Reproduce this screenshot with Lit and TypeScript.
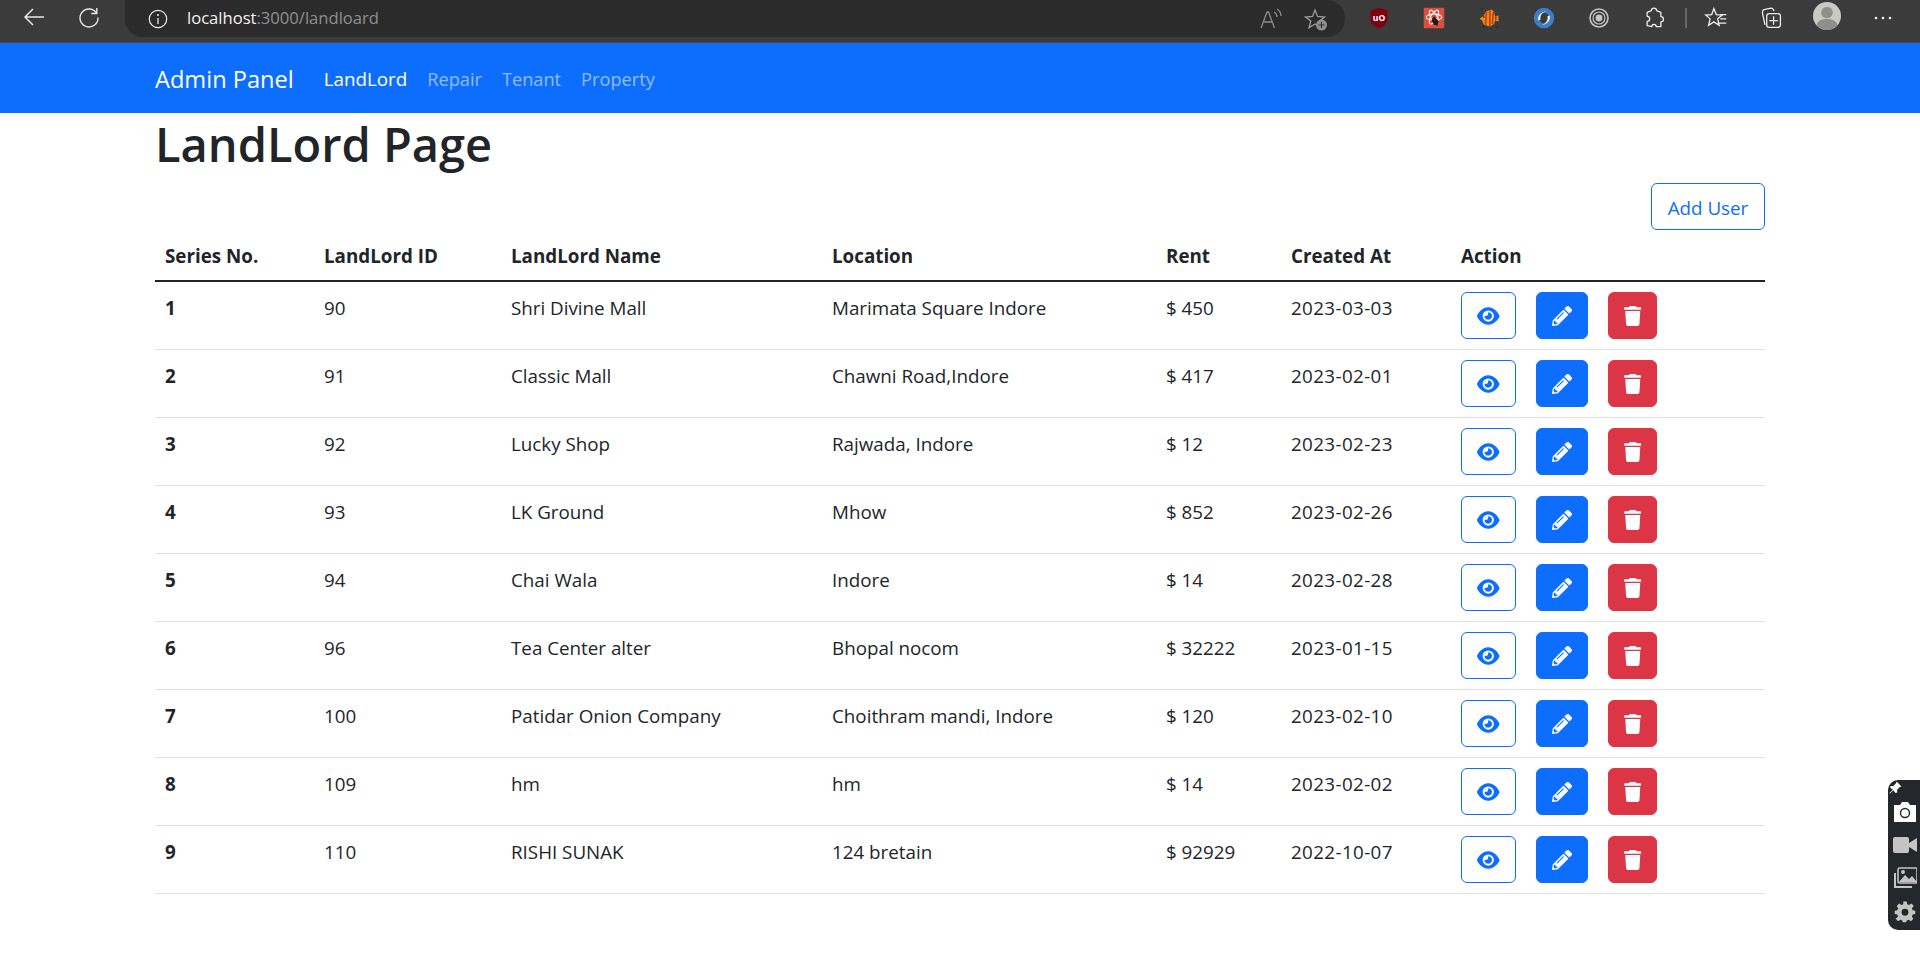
import { LitElement, html, css, svg } from "lit";
import { customElement } from "lit/decorators.js";

const rows = [
  [1, 90, "Shri Divine Mall", "Marimata Square Indore", "$ 450", "2023-03-03"],
  [2, 91, "Classic Mall", "Chawni Road,Indore", "$ 417", "2023-02-01"],
  [3, 92, "Lucky Shop", "Rajwada, Indore", "$ 12", "2023-02-23"],
  [4, 93, "LK Ground", "Mhow", "$ 852", "2023-02-26"],
  [5, 94, "Chai Wala", "Indore", "$ 14", "2023-02-28"],
  [6, 96, "Tea Center alter", "Bhopal nocom", "$ 32222", "2023-01-15"],
  [7, 100, "Patidar Onion Company", "Choithram mandi, Indore", "$ 120", "2023-02-10"],
  [8, 109, "hm", "hm", "$ 14", "2023-02-02"],
  [9, 110, "RISHI SUNAK", "124 bretain", "$ 92929", "2022-10-07"],
];

const eye = html`<svg class="ic eye" viewBox="0 0 576 512"><path fill="currentColor" d="M288 32c-80.8 0-145.5 36.8-192.6 80.6C48.6 156 17.3 208 2.5 243.7c-3.3 7.9-3.3 16.7 0 24.6C17.3 304 48.6 356 95.4 399.4C142.5 443.2 207.2 480 288 480s145.5-36.8 192.6-80.6c46.8-43.5 78.1-95.4 93-131.1c3.3-7.9 3.3-16.7 0-24.6c-14.9-35.7-46.2-87.7-93-131.1C433.5 68.8 368.8 32 288 32zM144 256a144 144 0 1 1 288 0 144 144 0 1 1 -288 0zm144-64c0 35.3-28.7 64-64 64c-7.1 0-13.9-1.2-20.3-3.3c-5.5-1.8-11.9 1.6-11.7 7.4c.3 6.9 1.3 13.8 3.2 20.7c13.7 51.2 66.4 81.6 117.6 67.9s81.6-66.4 67.9-117.6c-11.1-41.5-47.8-69.4-88.6-71.1c-5.8-.2-9.2 6.1-7.4 11.7c2.1 6.4 3.3 13.2 3.3 20.3z"/></svg>`;
const pencil = html`<svg class="ic pen" viewBox="0 0 512 512"><path fill="currentColor" d="M497.9 142.1l-46.1 46.1c-4.7 4.7-12.3 4.7-17 0l-111-111c-4.7-4.7-4.7-12.3 0-17l46.1-46.1c18.7-18.7 49.1-18.7 67.9 0l60.1 60.1c18.8 18.7 18.8 49.1 0 67.9zM284.2 99.8L21.6 362.4.4 483.9c-2.9 16.4 11.4 30.6 27.8 27.8l121.5-21.3 262.6-262.6c4.7-4.7 4.7-12.3 0-17l-111-111c-4.8-4.7-12.4-4.7-17.1 0zM124.1 339.9c-5.5-5.5-5.5-14.3 0-19.8l154-154c5.5-5.5 14.3-5.5 19.8 0s5.5 14.3 0 19.8l-154 154c-5.5 5.5-14.3 5.5-19.8 0zM88 424h48v36.3l-64.5 11.3-31.1-31.1L51.7 376H88v48z"/></svg>`;
const trash = html`<svg class="ic bin" viewBox="0 0 448 512"><path fill="currentColor" d="M135.2 17.7L128 32H32C14.3 32 0 46.3 0 64S14.3 96 32 96H416c17.7 0 32-14.3 32-32s-14.3-32-32-32H320l-7.2-14.3C307.4 6.8 296.3 0 284.2 0H163.8c-12.1 0-23.2 6.8-28.6 17.7zM416 128H32L53.2 467c1.6 25.3 22.6 45 47.9 45H346.9c25.3 0 46.3-19.7 47.9-45L416 128z"/></svg>`;

const ext = (body: unknown, cls = "tb", vb = "0 0 24 24") => html`<svg class=${cls} viewBox=${vb}>${body}</svg>`;
const small = "-2 -2 28 28";

@customElement("app-root")
export class AppRoot extends LitElement {
  static styles = css`
    :host { display: block; min-height: 100vh; background: #fff; color: #212529; font-family: "Open Sans", "Noto Sans", sans-serif; font-size: 18.8px; line-height: 30px; }
    * { box-sizing: border-box; }
    .chrome { height: 43px; background: #3b3b3b; display: flex; align-items: flex-start; border-bottom: 1px solid #4b4b4b; }
    .nav-ic { display: flex; padding: 5px 0 0 22px; gap: 31px; width: 125px; flex: none; }
    .tb { width: 24px; height: 24px; flex: none; display: block; }
    .addr { width: 1220px; height: 37px; flex: none; background: #2b2b2b; border-radius: 0 18px 18px 18px; display: flex; align-items: center; padding: 0 17px 0 21px; }
    .url { margin: -2px 0 0 17px; font-size: 16.6px; line-height: 30px; color: #8f8f8f; flex: 1; white-space: nowrap; }
    .url b { font-weight: 400; color: #f2f2f2; }
    .addr-right { display: flex; gap: 21px; }
    .tools { display: flex; gap: 31px; padding: 6px 0 0 22px; align-items: flex-start; }
    .sep { width: 2px; height: 20px; background: #666; margin: 2px -14px 0 -12px; flex: none; }
    .avatar { width: 28px; height: 28px; margin: -4px -1px 0 -1px; }
    .navbar { height: 70px; background: #0d6efd; padding: 2px 155px 0; display: flex; align-items: center; }
    .brand { font-size: 23.6px; color: #fff; margin-right: 20px; line-height: 38px; }
    .navbar a { padding: 0 10px; color: rgba(255,255,255,.55); text-decoration: none; font-size: 18.2px; }
    .navbar a.active { color: #fff; font-size: 18.8px; }
    main { padding: 0 155px; }
    h1 { margin: 0 0 10px; padding-top: 1px; height: 60px; font-size: 47px; font-weight: 600; line-height: 60px; }
    .bar { display: flex; justify-content: flex-end; }
    .btn { height: 47px; border-radius: 6px; border: 1px solid #0d6efd; display: inline-flex; align-items: center; justify-content: center; padding: 1px 15px 0; background: #fff; color: #0d6efd; font: inherit; }
    .btn.add { width: 114px; padding-top: 2px; }
    .btn.solid { background: #0d6efd; color: #fff; }
    .btn.danger { background: #dc3545; border-color: #dc3545; color: #fff; }
    table { width: 100%; border-collapse: collapse; table-layout: fixed; }
    th, td { padding: 11px 10px 0; text-align: left; vertical-align: top; white-space: nowrap; }
    th { font-weight: 700; border-bottom: 2px solid #212529; height: 51px; }
    td { border-bottom: 1px solid #dee2e6; height: 68px; }
    td.num { font-weight: 700; }
    td.date { letter-spacing: .38px; }
    col.c1 { width: 159px; } col.c2 { width: 187px; } col.c3 { width: 321px; } col.c4 { width: 334px; } col.c5 { width: 125px; } col.c6 { width: 170px; }
    .acts { display: flex; gap: 20px; margin-top: -1px; }
    .ic { display: block; height: 20px; }
    .ic.eye { width: 22.5px; } .ic.pen { width: 20px; } .ic.bin { width: 17.5px; }
    .side { position: fixed; right: 0; top: 780px; width: 32px; height: 150px; background: #24282d; border-radius: 10px 0 0 10px; display: flex; flex-direction: column; align-items: flex-end; padding: 20px 3px 0 0; gap: 9px; }
    .side svg { width: 24px; height: 24px; display: block; }
    .side svg.pin { position: absolute; left: 1px; top: 1px; width: 13px; height: 13px; }
  `;

  render() {
    return html`
      <div class="chrome">
        <div class="nav-ic">
          ${ext(svg`<path d="M22 12H3M11 4l-8 8 8 8" fill="none" stroke="#e8e8e8" stroke-width="1.5"/>`)}
          ${ext(svg`<path d="M19.5 8A9 9 0 1 0 21 12.5M19.8 3v5.5h-5.5" fill="none" stroke="#e8e8e8" stroke-width="1.4"/>`)}
        </div>
        <div class="addr">
          ${ext(svg`<circle cx="12" cy="12" r="8.7" fill="none" stroke="#e8e8e8" stroke-width="1.2"/><path d="M12 11v6" stroke="#e8e8e8" stroke-width="1.3"/><circle cx="12" cy="8" r="1" fill="#e8e8e8"/>`)}
          <div class="url"><b>localhost</b>:3000/landloard</div>
          <div class="addr-right">
            ${ext(svg`<path d="M2 21l6-16h1.500l6 16M4.500 15h9" fill="none" stroke="#8c8c8c" stroke-width="1.300"/><path d="M15 5c2 1 3 3 3 5M18 2c2.500 1.500 4 4 4 7" fill="none" stroke="#8c8c8c" stroke-width="1.300"/>`)}
            ${ext(svg`<path d="M11 3l2.500 6.500 7 .5-5.400 4.400 1.800 6.800L11 17l-6 3.800 1.800-6.800L1.500 10l7-.5z" fill="none" stroke="#9a9a9a" stroke-width="1.300"/><circle cx="17.500" cy="18" r="5.500" fill="#8f8f8f"/><path d="M17.500 15v6M14.500 18h6" stroke="#333" stroke-width="1.200"/>`)}
          </div>
        </div>
        <div class="tools">
          ${ext(svg`<path d="M12 0l10 3.500v10c0 5-4.500 8.500-10 10.500C6.500 22 2 18.500 2 13.500v-10z" fill="#800010"/><text x="12" y="15" font-size="10" font-family="Open Sans" font-weight="700" text-anchor="middle" fill="#fff">uO</text>`, "tb", small)}
          ${ext(svg`<rect x="0" y="0" width="24" height="24" rx="1.500" fill="#dd4f3d"/><g fill="none" stroke="#fff" stroke-width="1.200"><ellipse cx="12" cy="11" rx="9" ry="3.700"/><ellipse cx="12" cy="11" rx="9" ry="3.700" transform="rotate(60 12 11)"/><ellipse cx="12" cy="11" rx="9" ry="3.700" transform="rotate(120 12 11)"/></g><path d="M12 10l6 6-2 5-4-1-3-5z" fill="#2a1a18"/>`, "tb", small)}
          ${ext(svg`<path d="M1 13l4-3 4-6 6-2 3 3 1 5 4-1v7l-4-1-1 4-5 3-7-2-2-5z" fill="#ef8c12"/><path d="M9 5l-1 15M13 3v19M17 5l-1 14" stroke="#c83a12" stroke-width="2"/><path d="M6 9v3M20 10v4" stroke="#222" stroke-width="1.200"/><path d="M3 0h1.800v1.800H3zM21 22h1.800v1.800H21zM5 21h1.800v1.800H5z" fill="#222"/>`, "tb", small)}
          ${ext(svg`<circle cx="12" cy="12" r="9" fill="none" stroke="#3f7cc6" stroke-width="6"/><path d="M5 15C4 9 9 4 15 4c-5 1-8 5-7 10M19 9c1 6-4 11-10 11 5-1 8-5 7-10" fill="#dcecff"/>`, "tb", small)}
          ${ext(svg`<g fill="none" stroke="#c6c6c6"><circle cx="12" cy="12" r="10.500" stroke-width="1.800"/><circle cx="12" cy="12" r="7" stroke-width="1.400"/></g><circle cx="12" cy="12" r="4" fill="#c6c6c6"/>`, "tb", small)}
          ${ext(svg`<path d="M9 3.500a3 3 0 0 1 6 0l5 2v5a3 3 0 0 1 0 6V22h-5.500a2.500 2.500 0 0 0-5 0L4 21v-5a3 3 0 0 0 0-6V5.500z" fill="none" stroke="#eee" stroke-width="1.500" stroke-linejoin="round"/>`, "tb", small)}
          <div class="sep"></div>
          ${ext(svg`<path d="M9.500 1l2.800 7 7 .5-5.400 4.500 1.800 7.500-6.200-4-6.200 4 1.800-7.500L0 8.500 7 8z" fill="none" stroke="#eee" stroke-width="1.500"/><path d="M17 8h7M17 13h7M14 18h10" stroke="#eee" stroke-width="1.500"/>`, "tb", small)}
          ${ext(svg`<path d="M5 20L2 6c0-2 1-4 3-4l7-1.500c2 0 3 1 3.500 3.500" fill="none" stroke="#eee" stroke-width="1.500"/><rect x="7" y="7" width="16" height="16" rx="3" fill="none" stroke="#eee" stroke-width="1.500"/><path d="M15 10v10M10 15h10" stroke="#eee" stroke-width="1.500"/>`, "tb", small)}
          ${ext(svg`<circle cx="12" cy="12" r="12" fill="#c9c9c6"/><circle cx="12" cy="9" r="5" fill="#8f8f8c"/><path d="M3 20c1-4.500 5-5.500 9-5.500s8 1 9 5.500a12 12 0 0 1-18 0z" fill="#8f8f8c"/>`, "tb avatar")}
          ${ext(svg`<circle cx="5" cy="12" r="1.300" fill="#eee"/><circle cx="12" cy="12" r="1.300" fill="#eee"/><circle cx="19" cy="12" r="1.300" fill="#eee"/>`)}
        </div>
      </div>
      <nav class="navbar">
        <span class="brand">Admin Panel</span>
        <a class="active" href="#">LandLord</a>
        <a href="#">Repair</a>
        <a href="#">Tenant</a>
        <a href="#">Property</a>
      </nav>
      <main>
        <h1>LandLord Page</h1>
        <div class="bar"><button class="btn add">Add User</button></div>
        <table>
          <colgroup><col class="c1"/><col class="c2"/><col class="c3"/><col class="c4"/><col class="c5"/><col class="c6"/><col/></colgroup>
          <thead><tr><th>Series No.</th><th>LandLord ID</th><th>LandLord Name</th><th>Location</th><th>Rent</th><th>Created At</th><th>Action</th></tr></thead>
          <tbody>
            ${rows.map((r) => html`<tr>
              <td class="num">${r[0]}</td><td>${r[1]}</td><td>${r[2]}</td><td>${r[3]}</td><td>${r[4]}</td><td class="date">${r[5]}</td>
              <td><div class="acts"><button class="btn">${eye}</button><button class="btn solid">${pencil}</button><button class="btn danger">${trash}</button></div></td>
            </tr>`)}
          </tbody>
        </table>
      </main>
      <aside class="side">
        <svg class="pin" viewBox="0 0 24 24"><path d="M14 1l9 9-3 1-5 5 0 5-3 1-4-5-6 6-1-1 6-6-5-4 1-3h5l5-5z" fill="#fff"/></svg>
        <svg viewBox="0 0 24 24"><path d="M1 5h6l2-3h6l2 3h6v17H1z" fill="#fff"/><circle cx="12" cy="13" r="4.500" fill="none" stroke="#24282d" stroke-width="1.400"/></svg>
        <svg viewBox="0 0 24 24"><rect x="0" y="4" width="16" height="16" rx="2" fill="#c4c4c4"/><path d="M16 10l8-5v14l-8-5z" fill="#c4c4c4"/></svg>
        <svg viewBox="0 0 24 24"><rect x="5" y="2" width="19" height="15" rx="1.500" fill="none" stroke="#c4c4c4" stroke-width="1.600"/><path d="M6 16l6-7 4 4 3-3 5 6z" fill="#c4c4c4"/><circle cx="10" cy="6" r="2" fill="#c4c4c4"/><path d="M2 7v14h17" fill="none" stroke="#c4c4c4" stroke-width="2"/></svg>
        <svg viewBox="-2 -2 28 28"><path fill="#c4c4c4" fill-rule="evenodd" d="M10 1h4l.6 3 2.300 1 2.600-1.700 2.800 2.800L20 8.700l1 2.300 3 .6v4l-3 .6-1 2.300 1.700 2.600-2.800 2.800-2.600-1.700-2.300 1-.6 1.800h-4l-.6-1.800-2.300-1-2.600 1.700-2.800-2.800L4 18.500 3 16.200 0 15.600v-4l3-.6 1-2.300L2.300 6.100l2.800-2.800L7.700 5 10 4zM12 9.500a4 4 0 1 0 0 8 4 4 0 0 0 0-8z"/></svg>
      </aside>
    `;
  }
}
